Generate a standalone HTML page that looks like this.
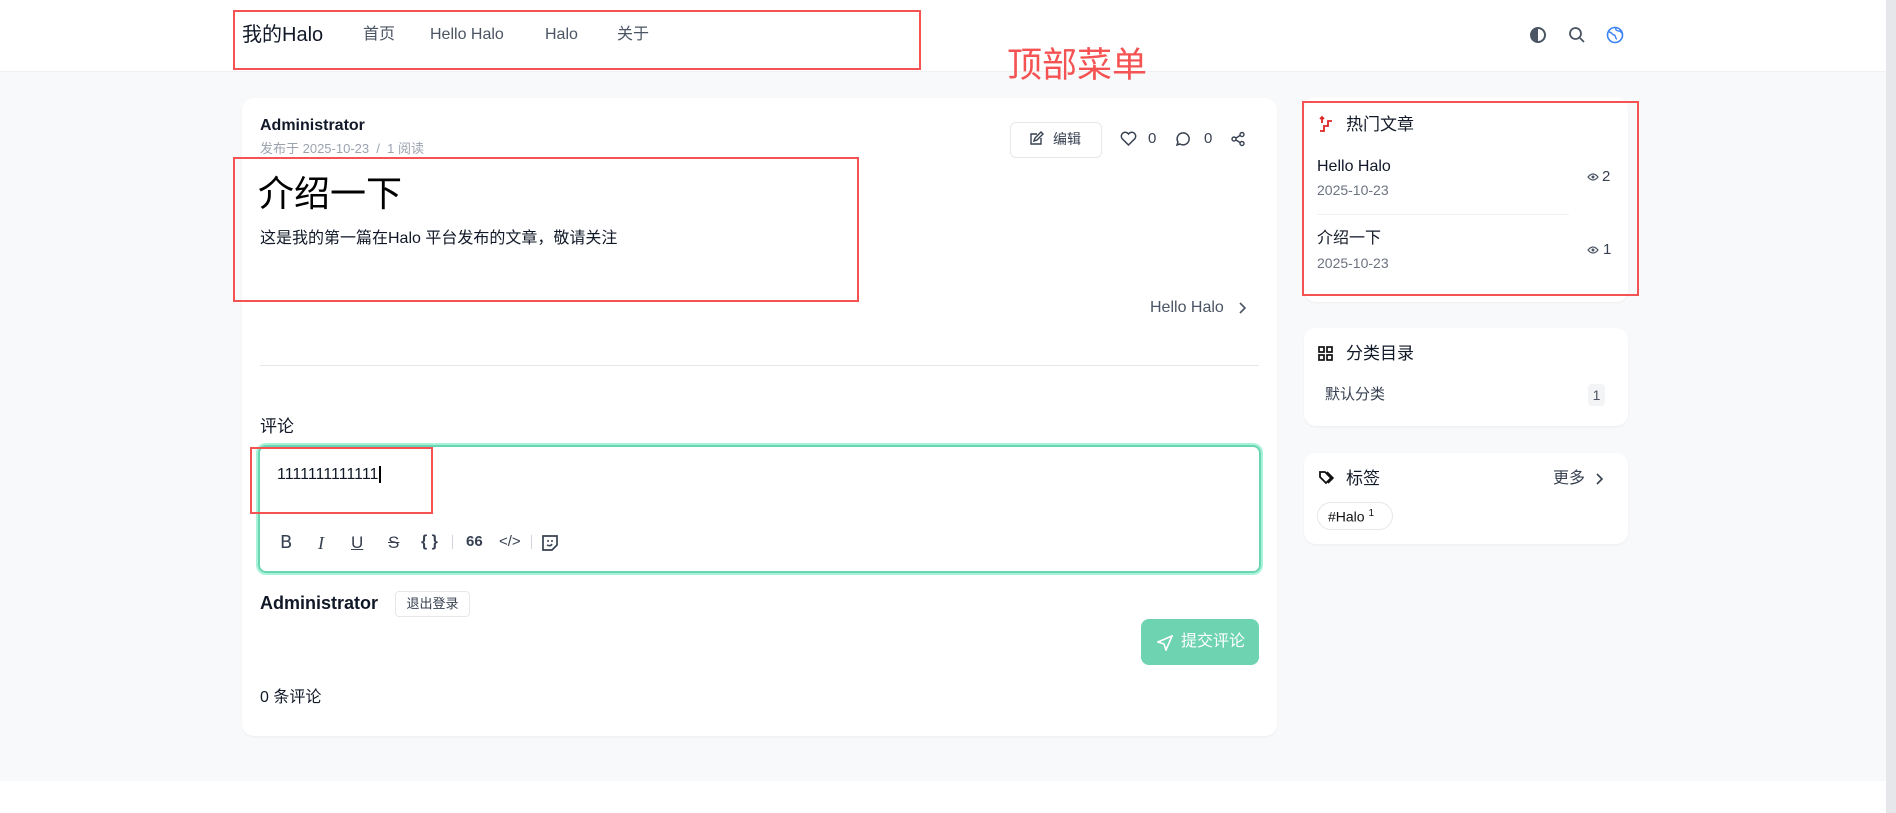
<!DOCTYPE html>
<html><head><meta charset="utf-8"><style>
*{box-sizing:border-box;margin:0;padding:0}
body{width:1896px;height:813px;background:#fff;font-family:"Liberation Sans","Noto Sans CJK SC",sans-serif;color:#111827;position:relative;overflow:hidden}
.a{position:absolute;white-space:nowrap;line-height:1.25}
.bg{position:absolute;left:0;top:71px;width:1886px;height:710px;background:#f8f9fb;border-top:1px solid #eef0f3}
.card{position:absolute;background:#fff;border-radius:12px;box-shadow:0 1px 2px rgba(0,0,0,.05)}
.red{position:absolute;border:2.5px solid #f55353}
svg{position:absolute}
.nav{font-size:16px;color:#4b5563;top:25px;line-height:20px}
</style></head><body>
<div class="bg"></div>
<div class="a" style="left:1886px;top:0;width:10px;height:813px;background:#e5e7eb"></div>
<div class="a" style="left:242px;top:23px;font-size:20px;line-height:24px">我的Halo</div>
<div class="a nav" style="left:363px">首页</div>
<div class="a nav" style="left:430px">Hello Halo</div>
<div class="a nav" style="left:545px">Halo</div>
<div class="a nav" style="left:617px">关于</div>
<svg style="left:1529px;top:26px" width="18" height="18" viewBox="0 0 18 18"><circle cx="9" cy="9" r="7" fill="none" stroke="#4b5563" stroke-width="2"/><path d="M9 2a7 7 0 0 0 0 14z" fill="#4b5563"/></svg>
<svg style="left:1568px;top:26px" width="18" height="18" viewBox="0 0 18 18"><circle cx="7.5" cy="7.5" r="5.5" fill="none" stroke="#4b5563" stroke-width="1.8"/><path d="M12 12l4 4" stroke="#4b5563" stroke-width="1.8"/></svg>
<svg style="left:1606px;top:26px" width="18" height="18" viewBox="0 0 18 18"><circle cx="9" cy="9" r="7.5" fill="none" stroke="#3b82f6" stroke-width="1.6"/><path d="M3 6c3 0 3 3 5 3s1 4 3 4M10 2c-1 2 1 3 3 3s2 2 3 2" fill="none" stroke="#3b82f6" stroke-width="1.4"/></svg>
<div class="red" style="left:233px;top:10px;width:688px;height:60px"></div>
<div class="a" style="left:1007px;top:44px;font-size:35px;color:#f55353">顶部菜单</div>

<div class="card" style="left:242px;top:98px;width:1035px;height:638px"></div>
<div class="a" style="left:260px;top:116px;font-size:16px;font-weight:bold">Administrator</div>
<div class="a" style="left:260px;top:141px;font-size:13px;color:#9ca3af">发布于 2025-10-23 &nbsp;/&nbsp; 1 阅读</div>
<div class="a" style="left:1010px;top:122px;width:92px;height:36px;border:1px solid #e5e7eb;border-radius:6px;font-size:14px;color:#374151;padding:8px 0 0 42px">编辑</div>
<svg style="left:1028px;top:131px" width="16" height="16" viewBox="0 0 16 16"><path d="M9 3H3v10h10V7M6 10l1-3 6-6 2 2-6 6z" fill="none" stroke="#374151" stroke-width="1.4"/></svg>
<svg style="left:1120px;top:131px" width="17" height="16" viewBox="0 0 17 16"><path d="M8.5 14L2 7.5A3.5 3.5 0 0 1 8.5 3a3.5 3.5 0 0 1 6.5 4.5z" fill="none" stroke="#374151" stroke-width="1.5"/></svg>
<div class="a" style="left:1148px;top:130px;font-size:15px;color:#374151">0</div>
<svg style="left:1174px;top:131px" width="17" height="16" viewBox="0 0 17 16"><path d="M3 14l1-3a6 6 0 1 1 2 2z" fill="none" stroke="#374151" stroke-width="1.5"/></svg>
<div class="a" style="left:1204px;top:130px;font-size:15px;color:#374151">0</div>
<svg style="left:1230px;top:131px" width="16" height="16" viewBox="0 0 16 16"><circle cx="12" cy="3.5" r="2" fill="none" stroke="#374151" stroke-width="1.4"/><circle cx="4" cy="8" r="2" fill="none" stroke="#374151" stroke-width="1.4"/><circle cx="12" cy="12.5" r="2" fill="none" stroke="#374151" stroke-width="1.4"/><path d="M6 7l4-2.5M6 9l4 2.5" stroke="#374151" stroke-width="1.4"/></svg>
<div class="a" style="left:258px;top:171px;font-size:36px;color:#000">介绍一下</div>
<div class="a" style="left:260px;top:229px;font-size:16px">这是我的第一篇在Halo 平台发布的文章，敬请关注</div>
<div class="red" style="left:233px;top:157px;width:626px;height:145px"></div>
<div class="a" style="left:1150px;top:298px;font-size:16px;color:#4b5563">Hello Halo</div>
<svg style="left:1236px;top:301px" width="12" height="14" viewBox="0 0 12 14"><path d="M4 2l5 5-5 5" fill="none" stroke="#4b5563" stroke-width="1.6"/></svg>
<div class="a" style="left:260px;top:365px;width:999px;height:1px;background:#e5e7eb"></div>
<div class="a" style="left:260px;top:416px;font-size:17px">评论</div>
<div class="a" style="left:258px;top:445px;width:1003px;height:128px;border:2px solid #6ad5b3;border-radius:8px;box-shadow:0 0 0 2px #a7f3d8"></div>
<div class="a" style="left:277px;top:465px;font-size:16px">1111111111111<span style="border-left:2px solid #000;margin-left:1px"></span></div>
<div class="red" style="left:250px;top:447px;width:183px;height:67px"></div>
<div class="a" style="left:280px;top:532px;font-size:18px;color:#374151;font-family:'DejaVu Sans',sans-serif">B</div>
<div class="a" style="left:318px;top:532px;font-size:18px;color:#374151;font-style:italic;font-family:'Liberation Serif',serif">I</div>
<div class="a" style="left:351px;top:532px;font-size:17px;color:#374151;text-decoration:underline">U</div>
<div class="a" style="left:388px;top:532px;font-size:17px;color:#374151;text-decoration:line-through">S</div>
<div class="a" style="left:421px;top:532px;font-size:16px;color:#374151;font-weight:bold">{ }</div>
<div class="a" style="left:452px;top:535px;width:1px;height:14px;background:#d1d5db"></div>
<div class="a" style="left:466px;top:533px;font-size:15px;color:#374151;font-weight:bold">66</div>
<div class="a" style="left:499px;top:533px;font-size:15px;color:#374151">&lt;/&gt;</div>
<div class="a" style="left:531px;top:535px;width:1px;height:14px;background:#d1d5db"></div>
<svg style="left:541px;top:534px" width="18" height="18" viewBox="0 0 18 18"><path d="M2 2h14v9l-5 5H2z" fill="none" stroke="#374151" stroke-width="1.7"/><circle cx="7" cy="7" r="1" fill="#374151"/><path d="M11 6v2M6 11c2 1 4 1 5-1" fill="none" stroke="#374151" stroke-width="1.5"/></svg>
<div class="a" style="left:260px;top:592px;font-size:18px;font-weight:bold">Administrator</div>
<div class="a" style="left:395px;top:591px;width:75px;height:26px;border:1px solid #e5e7eb;border-radius:4px;font-size:13px;color:#374151;text-align:center;line-height:24px">退出登录</div>
<div class="a" style="left:1141px;top:619px;width:118px;height:46px;background:#6ed3b0;border-radius:8px;color:#fff;font-size:16px;line-height:46px;padding-left:40px">提交评论</div>
<svg style="left:1157px;top:635px" width="16" height="16" viewBox="0 0 16 16"><path d="M15 1L1 7l6 2 2 6z" fill="none" stroke="#fff" stroke-width="1.6"/></svg>
<div class="a" style="left:260px;top:688px;font-size:16px">0 条评论</div>

<div class="card" style="left:1304px;top:97px;width:324px;height:205px"></div>
<svg style="left:1318px;top:115px" width="18" height="18" viewBox="0 0 18 18"><path d="M2 16h4v-5h4V6h4M4 2v6M2 4l2-2 2 2" fill="none" stroke="#dc2626" stroke-width="1.8"/></svg>
<div class="a" style="left:1346px;top:114px;font-size:17px">热门文章</div>
<div class="a" style="left:1317px;top:157px;font-size:16px">Hello Halo</div>
<div class="a" style="left:1317px;top:182px;font-size:14px;color:#6b7280">2025-10-23</div>
<svg style="left:1587px;top:172px" width="12" height="10" viewBox="0 0 12 10"><path d="M1 5q5-6 10 0q-5 6-10 0z" fill="none" stroke="#4b5563" stroke-width="1.2"/><circle cx="6" cy="5" r="1.5" fill="#4b5563"/></svg>
<div class="a" style="left:1602px;top:168px;font-size:15px;color:#374151">2</div>
<div class="a" style="left:1317px;top:214px;width:252px;height:1px;background:#f0f1f3"></div>
<div class="a" style="left:1317px;top:229px;font-size:16px">介绍一下</div>
<div class="a" style="left:1317px;top:255px;font-size:14px;color:#6b7280">2025-10-23</div>
<svg style="left:1587px;top:245px" width="12" height="10" viewBox="0 0 12 10"><path d="M1 5q5-6 10 0q-5 6-10 0z" fill="none" stroke="#4b5563" stroke-width="1.2"/><circle cx="6" cy="5" r="1.5" fill="#4b5563"/></svg>
<div class="a" style="left:1603px;top:241px;font-size:15px;color:#374151">1</div>
<div class="red" style="left:1302px;top:101px;width:337px;height:195px"></div>

<div class="card" style="left:1304px;top:328px;width:324px;height:98px"></div>
<svg style="left:1318px;top:346px" width="15" height="15" viewBox="0 0 15 15"><rect x="1" y="1" width="5" height="5" fill="none" stroke="#111" stroke-width="1.7"/><rect x="9" y="1" width="5" height="5" fill="none" stroke="#111" stroke-width="1.7"/><rect x="1" y="9" width="5" height="5" fill="none" stroke="#111" stroke-width="1.7"/><rect x="9" y="9" width="5" height="5" fill="none" stroke="#111" stroke-width="1.7"/></svg>
<div class="a" style="left:1346px;top:343px;font-size:17px">分类目录</div>
<div class="a" style="left:1325px;top:386px;font-size:15px;color:#374151">默认分类</div>
<div class="a" style="left:1588px;top:384px;width:17px;height:22px;background:#f3f4f6;border-radius:4px;font-size:14px;color:#4b5563;text-align:center;line-height:22px">1</div>

<div class="card" style="left:1304px;top:453px;width:324px;height:91px"></div>
<svg style="left:1318px;top:470px" width="17" height="16" viewBox="0 0 17 16"><path d="M2 2h5l6 6-5 5-6-6z" fill="none" stroke="#111" stroke-width="1.8"/><path d="M9 2l6 6-5 5" fill="none" stroke="#111" stroke-width="1.6"/></svg>
<div class="a" style="left:1346px;top:468px;font-size:17px">标签</div>
<div class="a" style="left:1553px;top:469px;font-size:16px;color:#374151">更多</div>
<svg style="left:1593px;top:472px" width="12" height="14" viewBox="0 0 12 14"><path d="M4 2l5 5-5 5" fill="none" stroke="#374151" stroke-width="1.6"/></svg>
<div class="a" style="left:1317px;top:502px;width:76px;height:28px;border:1px solid #e5e7eb;border-radius:14px;font-size:14px;color:#111;padding:5px 0 0 10px">#Halo <sup style="font-size:10px">1</sup></div>
</body></html>
